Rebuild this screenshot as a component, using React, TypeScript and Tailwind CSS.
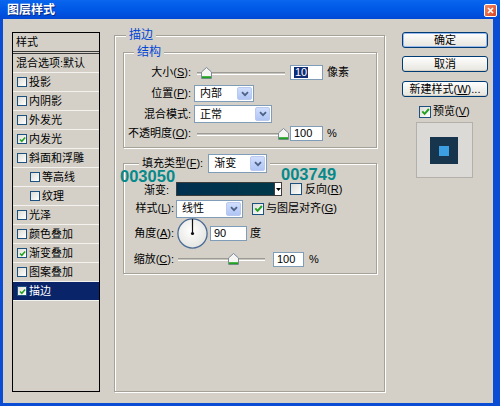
import React from 'react';

const font = "font-['Liberation_Sans','Noto_Sans_CJK_SC',sans-serif]";

const styles = [
  { label: '投影' },
  { label: '内阴影' },
  { label: '外发光' },
  { label: '内发光', checked: true },
  { label: '斜面和浮雕' },
  { label: '等高线', indent: true },
  { label: '纹理', indent: true },
  { label: '光泽' },
  { label: '颜色叠加' },
  { label: '渐变叠加', checked: true },
  { label: '图案叠加' },
  { label: '描边', checked: true, active: true },
];

function Check({ checked = false, small = false }: { checked?: boolean; small?: boolean }) {
  return (
    <span
      className={`flex shrink-0 items-center justify-center border border-[#1c5180] bg-linear-to-br from-[#dcdcd7] to-white ${
        small ? 'h-[10px] w-[10px]' : 'h-[12px] w-[12px]'
      }`}
    >
      {checked && (
        <svg width={small ? 7 : 9} height={small ? 7 : 9} viewBox="0 0 9 9">
          <path d="M1.3 4.4 L3.6 6.8 L7.9 2" fill="none" stroke="#21a121" strokeWidth="1.9" />
        </svg>
      )}
    </span>
  );
}

function Chevron() {
  return (
    <svg width="8" height="6" viewBox="0 0 8 6">
      <path d="M1 1.2 L4 4.2 L7 1.2" fill="none" stroke="#4d6185" strokeWidth="1.8" />
    </svg>
  );
}

function Combo({ value, className }: { value: string; className: string }) {
  return (
    <div className={`flex items-stretch border border-[#7f9db9] bg-white ${className}`}>
      <span className="flex flex-1 items-center pl-[5px] text-[11px]">{value}</span>
      <span className="m-px flex w-[15px] items-center justify-center rounded-[2px] border border-[#b9c9ef] bg-linear-to-b from-[#d0defd] to-[#b0c5f5]">
        <Chevron />
      </span>
    </div>
  );
}

function Field({ value, className, selected = false }: { value: string; className: string; selected?: boolean }) {
  return (
    <div className={`flex items-center border border-[#7f9db9] bg-white pl-[3px] ${className}`}>
      {selected ? <span className="bg-[#0f2c74] px-px text-white">{value}</span> : <span>{value}</span>}
    </div>
  );
}

function Slider({ className, at }: { className: string; at: number }) {
  return (
    <div className={`relative h-[12px] ${className}`}>
      <div className="absolute left-0 right-0 top-[5px] h-[3px] border-t border-b border-t-[#9c9a94] border-b-white bg-[#c9c6bf]" />
      <svg className="absolute top-0" style={{ left: at - 5.5 }} width="11" height="12" viewBox="0 0 11 12">
        <path d="M0.5 5 L5.5 0.5 L10.5 5 V11.5 H0.5 Z" fill="#f5f5f2" stroke="#7d8b99" />
        <path d="M1 10.2 H10" stroke="#21a121" strokeWidth="2" />
      </svg>
    </div>
  );
}

function Dial() {
  return (
    <svg width="31" height="31" viewBox="0 0 31 31" className="shrink-0">
      <defs>
        <radialGradient id="dialFill" cx="45%" cy="40%" r="65%">
          <stop offset="0%" stopColor="#ffffff" />
          <stop offset="100%" stopColor="#e2e2de" />
        </radialGradient>
      </defs>
      <circle cx="15.5" cy="15.5" r="14.6" fill="url(#dialFill)" stroke="#4b6b96" strokeWidth="1.3" />
      <path d="M15.5 15.5 V1" stroke="#111" strokeWidth="1.2" />
      <circle cx="15.5" cy="15.5" r="1.6" fill="#111" />
    </svg>
  );
}

function XPButton({ children, primary = false }: { children: React.ReactNode; primary?: boolean }) {
  return (
    <button
      className={`flex h-[16px] w-[86px] items-center justify-center rounded-[3px] border border-[#003c74] bg-linear-to-b from-[#fefefe] to-[#e6e5de] text-[11px] ${
        primary ? 'shadow-[inset_0_0_0_1px_#9ab9ee]' : 'shadow-[inset_0_-1px_0_#d6d0c5]'
      }`}
    >
      {children}
    </button>
  );
}

export default function App() {
  return (
    <div className={`relative flex h-[406px] w-[500px] flex-col bg-[#0a4cd4] text-[11px] leading-none text-black ${font}`}>
      {/* title bar */}
      <div className="flex h-[19px] items-center justify-between bg-linear-to-b from-[#0a66ee] via-[#0058e6] to-[#0048d6] pl-[7px] pr-[3px]">
        <span className="text-[12px] font-bold text-white [text-shadow:1px_1px_0_#0a2a80]">图层样式</span>
        <span className="mb-[-2px] flex h-[13px] w-[13px] items-center justify-center rounded-[2px] border border-white bg-linear-to-br from-[#f08a68] to-[#d8421c]">
          <svg width="7" height="7" viewBox="0 0 7 7">
            <path d="M1 1 L6 6 M6 1 L1 6" stroke="#fff" strokeWidth="1.6" />
          </svg>
        </span>
      </div>

      {/* dialog body */}
      <div className="mb-[3px] ml-[3px] mr-[7px] flex flex-1 items-start bg-[#d4d0c8] pl-[9px]">
        {/* style list */}
        <div className="mt-[13px] flex h-[360px] w-[88px] flex-col border border-black">
          <div className="flex h-[21px] items-center border-b-[3px] border-double border-[#3a3a3a] pl-[3px]">样式</div>
          <div className="flex h-[19px] items-center border-b border-[#f3f2ee] pl-[3px]">混合选项:默认</div>
          {styles.map((s) => (
            <div
              key={s.label}
              className={`flex h-[19px] items-center gap-[2px] border-b ${
                s.active ? 'border-[#f3f2ee] bg-[#0a246a] text-white' : 'border-[#f3f2ee]'
              } ${s.indent ? 'pl-[17px]' : 'pl-[4px]'}`}
            >
              <Check small checked={s.checked} />
              <span>{s.label}</span>
            </div>
          ))}
        </div>

        {/* stroke settings */}
        <fieldset className="ml-[14px] mt-[10px] h-[363px] w-[271px] border border-[#a3a198] shadow-[inset_1px_1px_0_#fff,1px_1px_0_#fff]">
          <legend className="ml-[11px] bg-[#d4d0c8] px-[3px] text-[12px] leading-[12px] text-[#0046d5]">描边</legend>

          <fieldset className="ml-[8px] mr-[7px] mt-[5px] border border-[#a3a198] pb-[4px] shadow-[inset_1px_1px_0_#fff,1px_1px_0_#fff]">
            <legend className="ml-[10px] bg-[#d4d0c8] px-[3px] text-[12px] leading-[12px] text-[#0046d5]">结构</legend>
            <div className="mt-[4px] flex flex-col">
              <div className="flex h-[21px] items-center">
                <span className="w-[67px] text-right">大小(<u>S</u>):</span>
                <Slider className="ml-[6px] w-[88px]" at={9} />
                <Field className="ml-[5px] h-[15px] w-[33px]" value="10" selected />
                <span className="ml-[4px]">像素</span>
              </div>
              <div className="flex h-[21px] items-center">
                <span className="w-[67px] text-right">位置(<u>P</u>):</span>
                <Combo className="ml-[3px] h-[17px] w-[60px]" value="内部" />
              </div>
              <div className="flex h-[20px] items-center">
                <span className="w-[67px] text-right">混合模式:</span>
                <Combo className="ml-[3px] h-[18px] w-[78px]" value="正常" />
              </div>
              <div className="flex h-[19px] items-center">
                <span className="w-[67px] text-right">不透明度(<u>O</u>):</span>
                <Slider className="ml-[6px] w-[88px]" at={86} />
                <Field className="ml-[5px] h-[15px] w-[33px]" value="100" />
                <span className="ml-[4px]">%</span>
              </div>
            </div>
          </fieldset>

          <fieldset className="ml-[8px] mr-[7px] mt-[6px] border border-[#a3a198] pb-[5px] shadow-[inset_1px_1px_0_#fff,1px_1px_0_#fff]">
            <legend className="ml-[15px] bg-[#d4d0c8] px-[3px]">
              <div className="flex h-[19px] items-center">
                <span>填充类型(<u>F</u>):</span>
                <Combo className="ml-[5px] h-[19px] w-[59px]" value="渐变" />
              </div>
            </legend>
            <div className="mt-[6px] flex flex-col">
              <div className="flex h-[20px] items-center">
                <span className="w-[50px] pr-[5px] pt-[2px] text-right">渐变:</span>
                <div className="ml-[2px] flex h-[14px] w-[106px] border border-[#3c3c3c]">
                  <div className="flex-1 bg-linear-to-r from-[#003050] to-[#003749]" />
                  <div className="flex w-[7px] items-center justify-center border-l border-[#3c3c3c] bg-white">
                    <svg width="5" height="3" viewBox="0 0 5 3">
                      <path d="M0 0 H5 L2.5 3 Z" fill="#000" />
                    </svg>
                  </div>
                </div>
                <span className="ml-[8px]">
                  <Check />
                </span>
                <span className="ml-[3px]">反向(<u>R</u>)</span>
              </div>
              <div className="flex h-[19px] items-center">
                <span className="w-[50px] text-right">样式(<u>L</u>):</span>
                <Combo className="ml-[2px] h-[18px] w-[67px]" value="线性" />
                <span className="ml-[9px]">
                  <Check checked />
                </span>
                <span className="ml-[2px]">与图层对齐(<u>G</u>)</span>
              </div>
              <div className="flex h-[31px] items-center">
                <span className="w-[50px] text-right">角度(<u>A</u>):</span>
                <span className="ml-[3px]">
                  <Dial />
                </span>
                <Field className="ml-[2px] h-[15px] w-[37px]" value="90" />
                <span className="ml-[3px]">度</span>
              </div>
              <div className="mt-px flex h-[18px] items-center">
                <span className="w-[50px] text-right">缩放(<u>C</u>):</span>
                <Slider className="ml-[4px] w-[87px]" at={55} />
                <Field className="ml-[8px] h-[15px] w-[31px]" value="100" />
                <span className="ml-[5px]">%</span>
              </div>
            </div>
          </fieldset>
        </fieldset>

        {/* buttons and preview */}
        <div className="ml-[17px] mt-[13px] flex w-[86px] flex-col">
          <XPButton primary>确定</XPButton>
          <div className="mt-[8px]">
            <XPButton>取消</XPButton>
          </div>
          <div className="mt-[9px]">
            <XPButton>
              新建样式(<u>W</u>)...
            </XPButton>
          </div>
          <div className="ml-[17px] mt-[8px] flex h-[13px] items-center gap-[2px]">
            <Check checked />
            <span>预览(<u>V</u>)</span>
          </div>
          <div className="ml-[14px] mt-[4px] h-[56px] w-[57px] border border-[#b3b0a9] bg-[#dcdad6] pl-[13px] pt-[14px]">
            <div className="h-[27px] w-[28px] bg-[#17364e] pl-[9px] pt-[9px]">
              <div className="h-[10px] w-[10px] bg-[#3c9fe2]" />
            </div>
          </div>
        </div>
      </div>

      {/* colour annotations */}
      <span className="absolute left-[120px] top-[170px] font-['Liberation_Sans',sans-serif] text-[16.5px] font-bold leading-[12px] text-[#07898a]">
        003050
      </span>
      <span className="absolute left-[281px] top-[168px] font-['Liberation_Sans',sans-serif] text-[16.5px] font-bold leading-[12px] text-[#07898a]">
        003749
      </span>
    </div>
  );
}
